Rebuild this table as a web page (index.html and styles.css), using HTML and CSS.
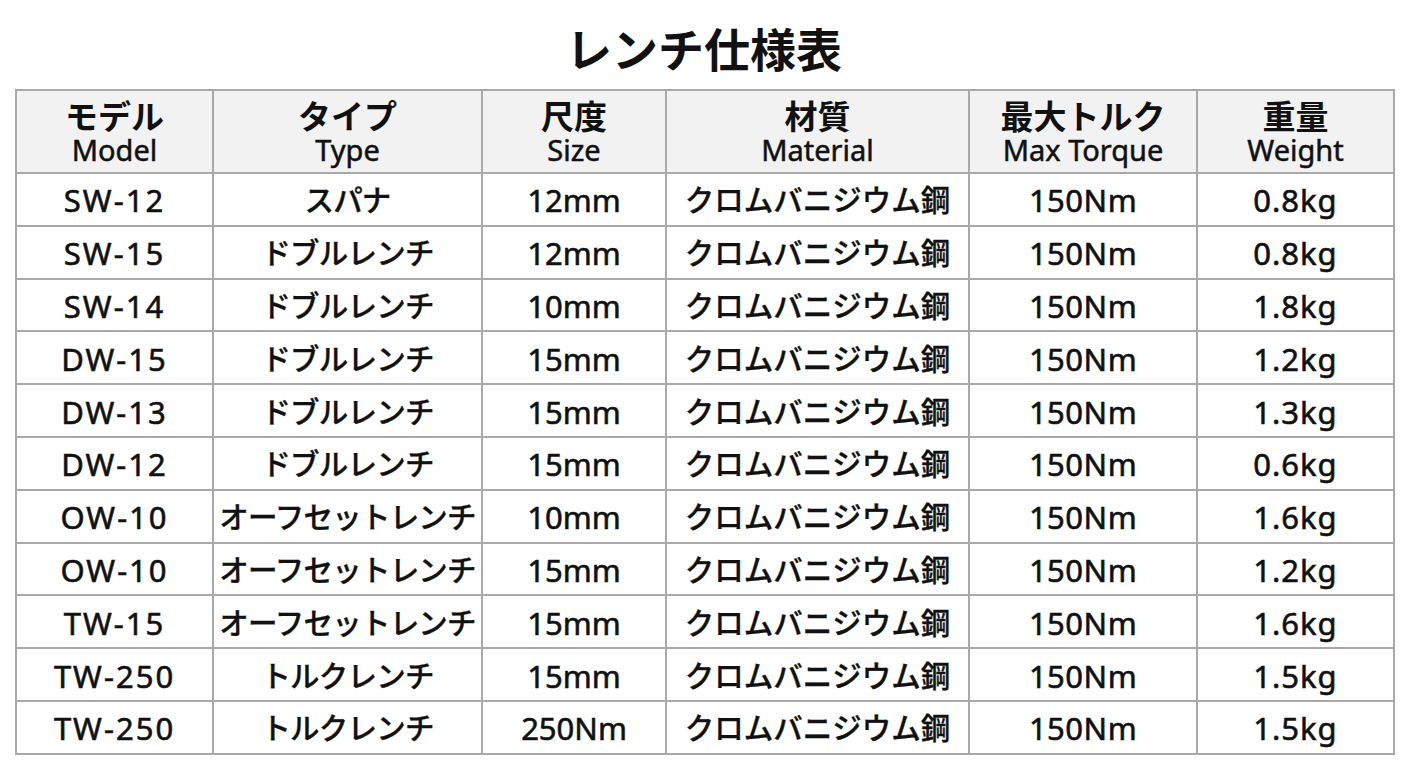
FILE: index.html
```html
<!DOCTYPE html>
<html lang="ja">
<head>
<meta charset="utf-8">
<title>レンチ仕様表</title>
<link rel="stylesheet" href="styles.css">
</head>
<body>
<h1 class="title">レンチ仕様表</h1>
<table class="spec">
  <colgroup>
    <col class="c1"><col class="c2"><col class="c3"><col class="c4"><col class="c5"><col class="c6">
  </colgroup>
  <thead>
    <tr>
      <th><span class="jp">モデル</span><span class="en">Model</span></th>
      <th><span class="jp">タイプ</span><span class="en">Type</span></th>
      <th><span class="jp">尺度</span><span class="en">Size</span></th>
      <th><span class="jp">材質</span><span class="en">Material</span></th>
      <th><span class="jp">最大トルク</span><span class="en">Max Torque</span></th>
      <th><span class="jp">重量</span><span class="en">Weight</span></th>
    </tr>
  </thead>
  <tbody>
    <tr><td>SW-12</td><td>スパナ</td><td>12mm</td><td>クロムバニジウム鋼</td><td>150Nm</td><td>0.8kg</td></tr>
    <tr><td>SW-15</td><td>ドブルレンチ</td><td>12mm</td><td>クロムバニジウム鋼</td><td>150Nm</td><td>0.8kg</td></tr>
    <tr><td>SW-14</td><td>ドブルレンチ</td><td>10mm</td><td>クロムバニジウム鋼</td><td>150Nm</td><td>1.8kg</td></tr>
    <tr><td>DW-15</td><td>ドブルレンチ</td><td>15mm</td><td>クロムバニジウム鋼</td><td>150Nm</td><td>1.2kg</td></tr>
    <tr><td>DW-13</td><td>ドブルレンチ</td><td>15mm</td><td>クロムバニジウム鋼</td><td>150Nm</td><td>1.3kg</td></tr>
    <tr><td>DW-12</td><td>ドブルレンチ</td><td>15mm</td><td>クロムバニジウム鋼</td><td>150Nm</td><td>0.6kg</td></tr>
    <tr><td>OW-10</td><td>オーフセットレンチ</td><td>10mm</td><td>クロムバニジウム鋼</td><td>150Nm</td><td>1.6kg</td></tr>
    <tr><td>OW-10</td><td>オーフセットレンチ</td><td>15mm</td><td>クロムバニジウム鋼</td><td>150Nm</td><td>1.2kg</td></tr>
    <tr><td>TW-15</td><td>オーフセットレンチ</td><td>15mm</td><td>クロムバニジウム鋼</td><td>150Nm</td><td>1.6kg</td></tr>
    <tr><td>TW-250</td><td>トルクレンチ</td><td>15mm</td><td>クロムバニジウム鋼</td><td>150Nm</td><td>1.5kg</td></tr>
    <tr><td>TW-250</td><td>トルクレンチ</td><td>250Nm</td><td>クロムバニジウム鋼</td><td>150Nm</td><td>1.5kg</td></tr>
  </tbody>
</table>
</body>
</html>
```
FILE: styles.css
```css
html, body {
  margin: 0;
  padding: 0;
  background: #ffffff;
}
body {
  font-family: "Noto Sans", "Noto Sans CJK JP", sans-serif;
  color: #111111;
  padding: 0 15px;
}
.title {
  margin: 0;
  height: 89px;
  line-height: 94px;
  text-align: center;
  font-family: "Noto Sans CJK JP", sans-serif;
  font-size: 46px;
  font-weight: 700;
}
.spec {
  width: 1378px;
  table-layout: fixed;
  border-collapse: collapse;
  border: 2px solid #a9a9a9;
}
.c1 { width: 197px; }
.c2 { width: 269px; }
.c3 { width: 184px; }
.c4 { width: 303px; }
.c5 { width: 228px; }
.c6 { width: 197px; }
.spec th, .spec td {
  border: 2px solid #a9a9a9;
  padding: 0;
  text-align: center;
  vertical-align: middle;
  white-space: nowrap;
}
.spec thead tr { height: 83px; }
.spec th {
  background: #f2f2f2;
  font-weight: 500;
}
.spec th .jp {
  display: block;
  font-family: "Noto Sans CJK JP", sans-serif;
  font-size: 33px;
  font-weight: 700;
  line-height: 36px;
}
.spec th .en {
  display: block;
  font-size: 29px;
  font-weight: 400;
  line-height: 34px;
  -webkit-text-stroke: 0.5px #111111;
}
.spec tbody tr { height: 52.8px; }
.spec td {
  font-size: 29.5px;
  font-weight: 500;
  line-height: 34px;
  padding-top: 2px;
  -webkit-text-stroke: 0.3px #111111;
}
.spec td:nth-child(2) { letter-spacing: -0.8px; }
.spec td:nth-child(1),
.spec td:nth-child(3),
.spec td:nth-child(5),
.spec td:nth-child(6) {
  font-size: 31px;
  font-weight: 400;
  -webkit-text-stroke: 0.6px #111111;
}
.spec td:nth-child(1) { letter-spacing: 2px; }
.spec td:nth-child(5) { letter-spacing: 0.5px; }
.spec td:nth-child(6) { letter-spacing: 1px; }
```
